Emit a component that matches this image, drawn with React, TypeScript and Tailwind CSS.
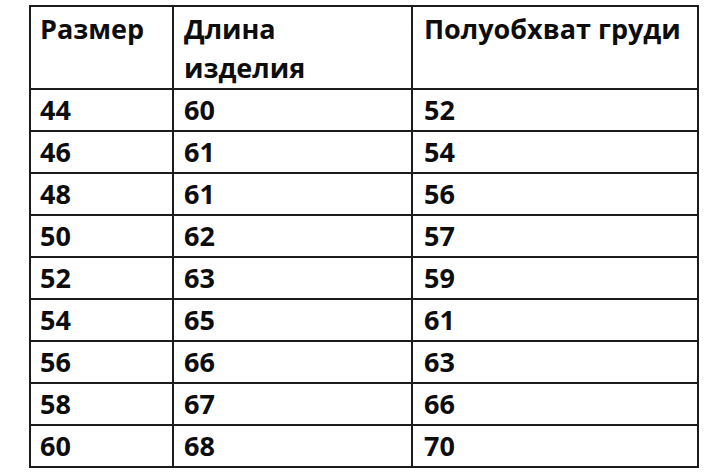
const rows = [
  ['44', '60', '52'],
  ['46', '61', '54'],
  ['48', '61', '56'],
  ['50', '62', '57'],
  ['52', '63', '59'],
  ['54', '65', '61'],
  ['56', '66', '63'],
  ['58', '67', '66'],
  ['60', '68', '70'],
]

export default function App() {
  return (
    <div className="h-[472px] w-[720px] bg-white pl-[29px] pt-[5px] font-['Open_Sans',sans-serif] font-bold text-[27px] leading-[39px] text-[#0d0d0d]">
      <table className="table-fixed border-collapse border-2 border-[#1c1c1c]">
        <colgroup>
          <col className="w-[143px]" />
          <col className="w-[239px]" />
          <col className="w-[286px]" />
        </colgroup>
        <thead>
          <tr className="h-[83px]">
            <th className="border-2 border-[#1c1c1c] pl-[9px] pt-[2px] text-left align-top font-bold">Размер</th>
            <th className="border-2 border-[#1c1c1c] pl-[10px] pt-[2px] text-left align-top font-bold">
              Длина
              <br />
              изделия
            </th>
            <th className="border-2 border-[#1c1c1c] pl-[11px] pt-[2px] text-left align-top font-bold">
              Полуобхват груди
            </th>
          </tr>
        </thead>
        <tbody>
          {rows.map((r, i) => (
            <tr key={i} className="h-[42px]">
              {r.map((v, j) => (
                <td
                  key={j}
                  className={`border-2 border-[#1c1c1c] align-top ${j === 0 ? 'pl-[9px]' : j === 1 ? 'pl-[10px]' : 'pl-[11px]'}`}
                >
                  {v}
                </td>
              ))}
            </tr>
          ))}
        </tbody>
      </table>
    </div>
  )
}
